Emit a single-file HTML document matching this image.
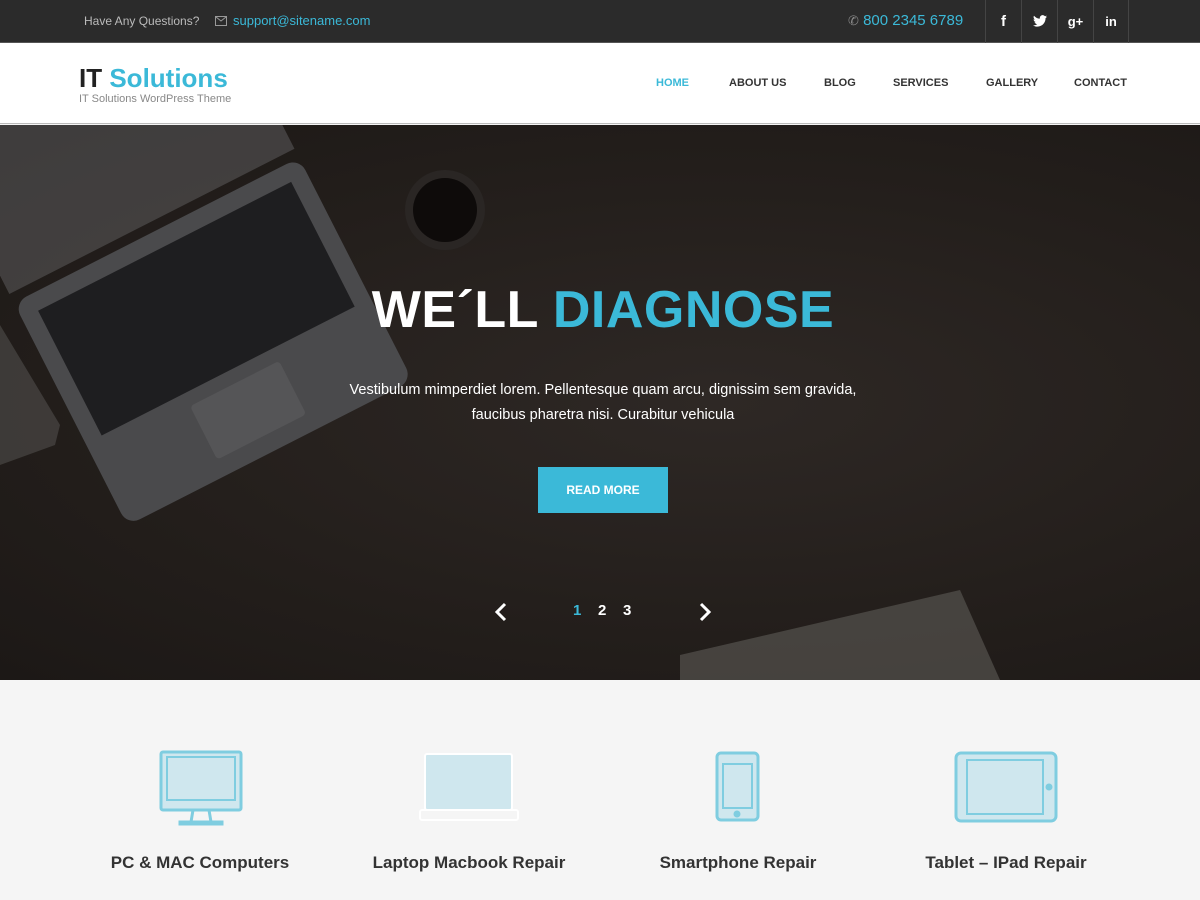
<!DOCTYPE html>
<html><head><meta charset="utf-8"><style>
*{margin:0;padding:0;box-sizing:border-box}
body{width:1200px;height:900px;overflow:hidden;font-family:"Liberation Sans",sans-serif;background:#f5f5f5}
.top{height:43px;background:#2b2b2b;position:relative;border-bottom:1px solid #555}
.top .q{position:absolute;left:84px;top:14px;font-size:12px;color:#bbb}
.top .mail{position:absolute;left:215px;top:13px;font-size:13px;color:#3bb9d8}
.top .ph{position:absolute;left:848px;top:12px;font-size:15px;color:#3bb9d8}
.soc{position:absolute;left:985px;top:0;height:43px;display:flex}
.soc div{width:36px;height:43px;border-left:1px solid #444;color:#fff;font-weight:bold;font-size:15px;text-align:center;line-height:43px}
.soc div:last-child{border-right:1px solid #444}
.hdr{height:81px;background:#fff;position:relative;border-bottom:1px solid #bbb}
.logo{position:absolute;left:79px;top:20px;font-size:26px;font-weight:bold;color:#222}
.logo span{color:#3bb9d8}
.tag{position:absolute;left:79px;top:93px;font-size:11px;color:#888}
.nav{position:absolute;top:34px;font-size:11px;font-weight:bold;color:#333}
.hero{position:absolute;top:125px;left:0;width:1200px;height:555px;background:radial-gradient(ellipse at 60% 50%,#2e2825 0%,#231e1b 60%,#1c1816 100%);overflow:hidden}
h1{position:absolute;top:280px;left:0;width:1206px;text-align:center;font-size:52px;font-weight:bold;color:#fff;letter-spacing:0.5px}
h1 span{color:#3bb9d8}
.p{position:absolute;top:378px;left:0;width:1206px;text-align:center;font-size:14.5px;color:#fff;line-height:25px}
.btn{position:absolute;left:538px;top:467px;width:130px;height:46px;background:#3bb9d8;color:#fff;font-size:12px;font-weight:bold;text-align:center;line-height:46px}
.dots{position:absolute;top:602px;font-size:15px;font-weight:bold;color:#fff}
.srv{position:absolute;top:853px;font-size:17px;font-weight:bold;color:#333;text-align:center;width:300px}
</style></head><body>
<div class="top">
<div class="q">Have Any Questions?</div>
<div class="mail"><svg width="12" height="10" style="vertical-align:-1px;margin-right:6px"><rect x="0.5" y="0.5" width="11" height="9" fill="none" stroke="#999"/><path d="M1 1l5 4 5-4" fill="none" stroke="#999"/></svg>support@sitename.com</div>
<div class="ph"><span style="color:#888;font-size:13px">✆</span> 800 2345 6789</div>
<div class="soc"><div>f</div><div><svg width="14" height="12" viewBox="0 0 24 20" style="vertical-align:-1px"><path fill="#fff" d="M24 2.4c-.9.4-1.8.6-2.8.8 1-.6 1.8-1.6 2.2-2.7-1 .6-2 1-3.1 1.2C19.3.7 18 0 16.6 0c-2.7 0-4.9 2.2-4.9 4.9 0 .4 0 .8.1 1.1C7.7 5.8 4.1 3.9 1.7.9c-.4.7-.7 1.6-.7 2.5 0 1.7.9 3.2 2.2 4.1-.8 0-1.6-.2-2.2-.6v.1c0 2.4 1.7 4.4 3.9 4.8-.4.1-.8.2-1.3.2-.3 0-.6 0-.9-.1.6 2 2.4 3.4 4.6 3.4-1.7 1.3-3.8 2.1-6.1 2.1H0c2.2 1.4 4.8 2.2 7.5 2.2 9.1 0 14-7.5 14-14v-.6c1-.7 1.8-1.6 2.5-2.6z"/></svg></div><div style="font-size:13px">g+</div><div style="font-size:13px">in</div></div>
</div>
<div class="hdr">
<div class="logo">IT <span>Solutions</span></div>
</div>
<div class="tag">IT Solutions WordPress Theme</div>
<div class="nav" style="left:656px;top:77px;color:#3bb9d8">HOME</div>
<div class="nav" style="left:729px;top:77px">ABOUT US</div>
<div class="nav" style="left:824px;top:77px">BLOG</div>
<div class="nav" style="left:893px;top:77px">SERVICES</div>
<div class="nav" style="left:986px;top:77px">GALLERY</div>
<div class="nav" style="left:1074px;top:77px">CONTACT</div>
<div class="hero">
<svg width="1200" height="555" style="position:absolute;left:0;top:0">
<g transform="rotate(-27 220 230)">
<rect x="60" y="90" width="320" height="250" rx="14" fill="#4a4a4c"/>
<rect x="78" y="108" width="284" height="140" fill="#1e1e20"/>
<rect x="170" y="262" width="100" height="60" rx="4" fill="#555557"/>
<rect x="60" y="-130" width="320" height="210" fill="#6a6a6c" opacity=".45"/>
</g>
<polygon points="0,200 60,300 55,320 0,340" fill="#5a5856" opacity=".5"/>
<circle cx="445" cy="85" r="40" fill="#2a2624"/><circle cx="445" cy="85" r="32" fill="#0e0b0a"/>
<polygon points="680,530 960,465 1000,555 680,555" fill="#55524f" opacity=".7"/>
</svg>
</div>
<h1>WE´LL <span>DIAGNOSE</span></h1>
<div class="p">Vestibulum mimperdiet lorem. Pellentesque quam arcu, dignissim sem gravida,<br>faucibus pharetra nisi. Curabitur vehicula</div>
<div class="btn">READ MORE</div>
<svg style="position:absolute;left:494px;top:602px" width="14" height="20"><path d="M11 2L3 10l8 8" stroke="#fff" stroke-width="3" fill="none"/></svg>
<svg style="position:absolute;left:698px;top:602px" width="14" height="20"><path d="M3 2l8 8-8 8" stroke="#fff" stroke-width="3" fill="none"/></svg>
<div class="dots" style="left:573px;color:#3bb9d8">1</div>
<div class="dots" style="left:598px">2</div>
<div class="dots" style="left:623px">3</div>
<svg style="position:absolute;left:0;top:740px" width="1200" height="100">
<g fill="#cfe7ee" stroke="#7fcde0" stroke-width="3">
<rect x="161" y="12" width="80" height="58" rx="2"/><rect x="167" y="17" width="68" height="43" stroke-width="2"/>
<path d="M193 70l-2 12M209 70l2 12" fill="none"/><rect x="180" y="82" width="42" height="2"/>
</g>
<g stroke="#fff" stroke-width="2" fill="#cfe7ee">
<rect x="425" y="14" width="87" height="56" rx="2"/><rect x="430" y="18" width="77" height="48" stroke="none"/>
<rect x="420" y="70" width="98" height="10" rx="2" fill="none"/>
</g>
<g fill="#cfe7ee" stroke="#7fcde0" stroke-width="3">
<rect x="717" y="13" width="41" height="67" rx="4"/><rect x="723" y="24" width="29" height="44" stroke-width="2"/>
<circle cx="737" cy="74" r="2" fill="#7fcde0"/>
</g>
<g fill="#cfe7ee" stroke="#7fcde0" stroke-width="3">
<rect x="956" y="13" width="100" height="68" rx="5"/><rect x="967" y="20" width="76" height="54" stroke-width="2"/>
<circle cx="1049" cy="47" r="2" fill="#7fcde0"/>
</g>
</svg>
<div class="srv" style="left:50px">PC &amp; MAC Computers</div>
<div class="srv" style="left:319px">Laptop Macbook Repair</div>
<div class="srv" style="left:588px">Smartphone Repair</div>
<div class="srv" style="left:856px">Tablet – IPad Repair</div>
</body></html>
